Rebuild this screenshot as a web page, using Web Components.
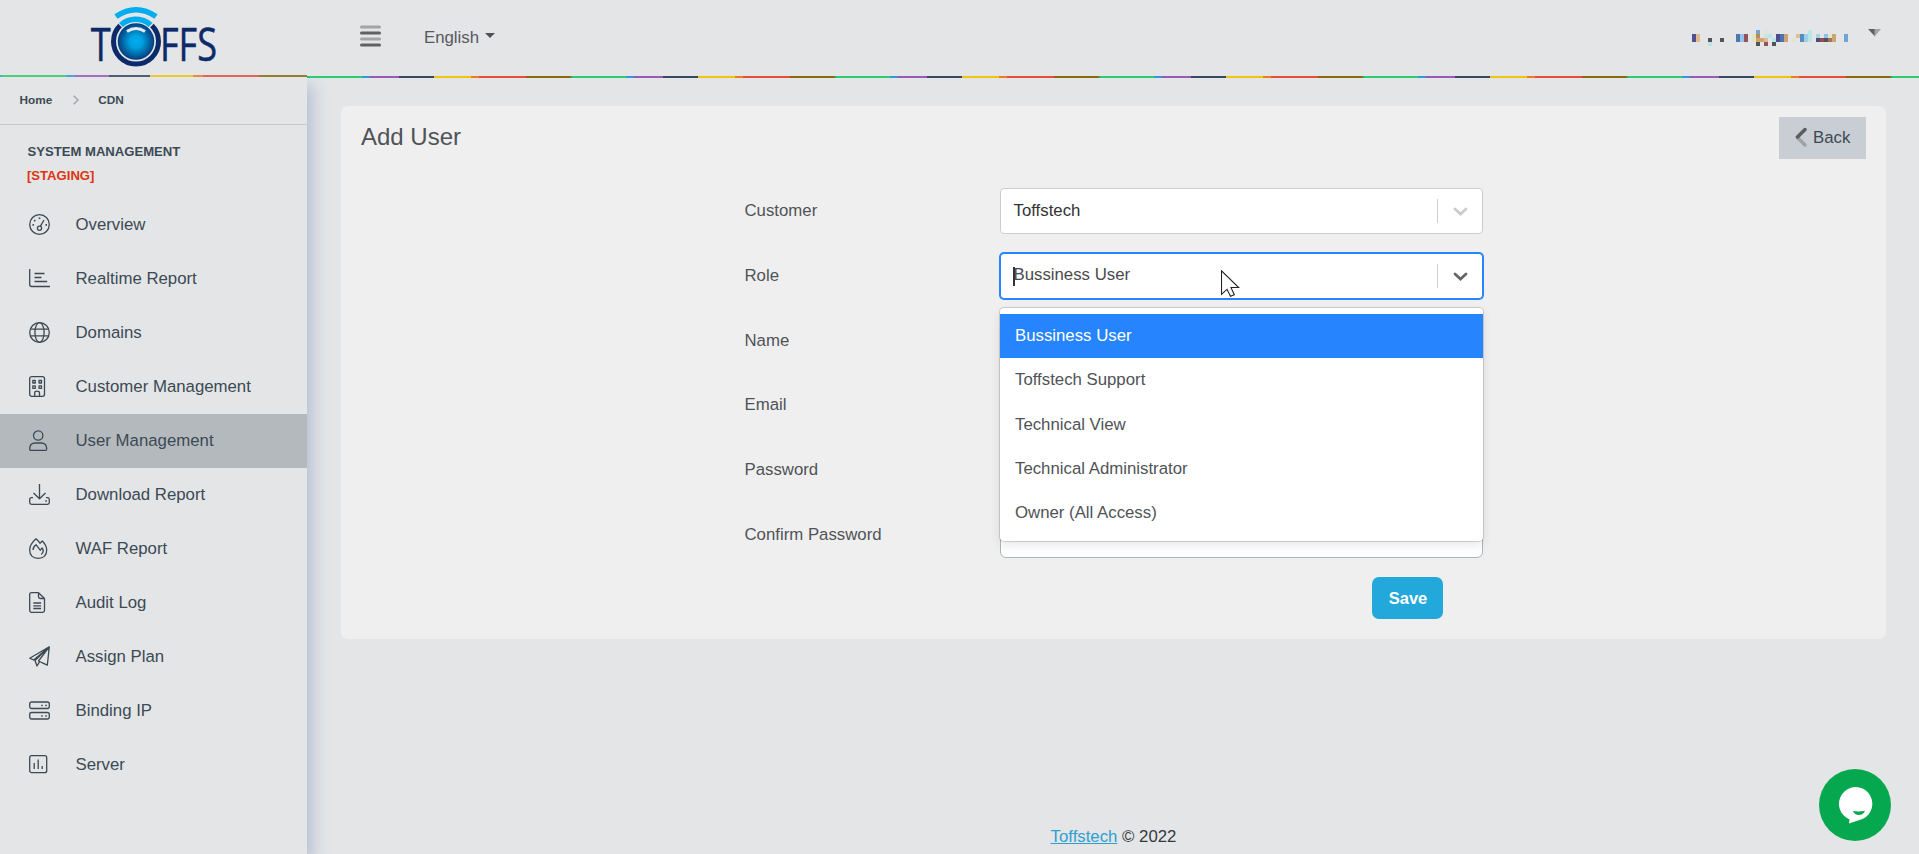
<!DOCTYPE html>
<html lang="en">
<head>
<meta charset="utf-8">
<title>Add User</title>
<style>
html,body{margin:0;height:100%;overflow:hidden}
body{font-family:"Liberation Sans",Arial,sans-serif;font-size:16.800px;line-height:24px;color:#4f5357;background:#e3e5e7}
</style>
</head>
<body>
<app-shell>
  <brand-logo slot="brand"></brand-logo>
  <top-bar slot="top"></top-bar>
  <side-nav slot="side"></side-nav>
  <panel-card heading="Add User">
    <form-row label="Customer"><select-box value="Toffstech"></select-box></form-row>
    <form-row label="Role"><select-box value="Bussiness User" open options="Bussiness User|Toffstech Support|Technical View|Technical Administrator|Owner (All Access)"></select-box></form-row>
    <form-row label="Name"><text-field></text-field></form-row>
    <form-row label="Email"><text-field></text-field></form-row>
    <form-row label="Password"><text-field></text-field></form-row>
    <form-row label="Confirm Password"><text-field></text-field></form-row>
    <save-button>Save</save-button>
  </panel-card>
  <page-footer slot="footer"></page-footer>
</app-shell>
<chat-bubble></chat-bubble>

<script>
const define = (name, render) => customElements.define(name, class extends HTMLElement {
  connectedCallback() {
    if (!this.shadowRoot) this.attachShadow({ mode: 'open' }).innerHTML = render(this);
  }
});

define('app-shell', () => `<style>
:host{display:grid;grid-template-columns:307px 1fr;grid-template-rows:78px 1fr;height:854px}
.brand{position:relative;z-index:3;background:#e3e5e7}
.side{position:relative;z-index:1;margin-top:-1px;background:#e3e5e7;box-shadow:6px 8px 15px rgba(68,97,154,.27)}
.top{position:relative;z-index:2;background:#e3e5e7}
main{display:flex;flex-direction:column;justify-content:space-between;padding:28px 33px 5px 34px}
</style>
<div class="brand"><slot name="brand"></slot></div>
<div class="top"><slot name="top"></slot></div>
<div class="side"><slot name="side"></slot></div>
<main><slot></slot><slot name="footer"></slot></main>`);

define('brand-logo', () => `<style>
:host{display:flex;flex-direction:column;height:77px}
svg{display:block;margin-left:90px;flex:none;overflow:visible}
.stripe{height:2px;opacity:.85;background:linear-gradient(90deg,#1abc9c 3px,#2ecc71 3px 66px,#3498db 66px 75px,#9b59b6 75px 109px,#34495e 109px 150px,#f1c40f 150px 193px,#e67e22 193px 203px,#e74c3c 203px 259px,#8a6a0a 259px)}
</style>
<svg width="130" height="75" viewBox="90 0 130 75">
<defs><radialGradient id="g"><stop offset="0" stop-color="#00adef"/><stop offset=".35" stop-color="#00a0e0"/><stop offset="1" stop-color="#063c7c"/></radialGradient></defs>
<circle cx="136" cy="41.500" r="22.500" fill="#e3e5e7" stroke="#0c2a69" stroke-width="5"/>
<path d="M120.500 26A22 22 0 0 1 151.500 26" fill="none" stroke="#e3e5e7" stroke-width="7"/>
<path d="M121 25A22 22 0 0 1 150.500 25" fill="none" stroke="#00adef" stroke-width="5.500"/>
<path d="M116 16.500Q136 3 156 16.500" fill="none" stroke="#00adef" stroke-width="5.500"/>
<circle cx="136" cy="41.500" r="18.300" fill="url(#g)"/>
<path d="M127 31.500Q136 25.500 145 31.500" fill="none" stroke="#e6eaf0" stroke-width="3"/>
<g font-family="Open Sans, sans-serif" font-size="46" fill="#0c2a69" stroke="#0c2a69" stroke-width=".5">
<text x="90.800" y="61" textLength="20" lengthAdjust="spacingAndGlyphs">T</text>
<text x="160" y="61" textLength="57" lengthAdjust="spacingAndGlyphs">FFS</text></g>
</svg><div class="stripe"></div>`);

const PIXELS = [
 '16:#70a4d3 18:#e3e4d1 29:#b9e5e5',
 '0:#514e94 1:#e2bb90 11:#5076ad 12:#93c2ec 13:#90545a 15:#e3e3bd 16:#bb8b55 18:#c9e6e6 19:#b9e5e5 21:#4d4d8d 22:#5073b0 23:#cfa472 26:#e2bb90 27:#508fc2 28:#9fd0e8 29:#b9e5e5 31:#a5d2e9 33:#8fc0ea 34:#e4e4d1 35:#cfa472 38:#70a4d3',
 '0:#514e94 1:#e2bb90 4:#505357 7:#505357 11:#5076ad 12:#93c2ec 13:#90545a 15:#e3e3bd 16:#cfa472 17:#cfa472 18:#e2bb90 20:#b9e5e5 21:#4d4d8d 22:#5073b0 23:#cfa472 25:#e3e3d1 27:#508fc2 28:#9fd0e8 29:#b9e5e5 31:#4d4d75 32:#90505a 33:#505357 34:#a87456 35:#cfa472 38:#70a4d3',
 '4:#b9e5e5 16:#505357 18:#90545a 20:#505357'
].map((r, y) => r.split(' ').map(c => { const [x, f] = c.split(':'); return `<path fill="${f}" d="M${x * 4} ${y * 4}h4v4h-4z"/>`; }).join('')).join('');

define('top-bar', () => `<style>
:host{display:flex;flex-direction:column;height:78px}
.bar{display:flex;align-items:flex-start;height:76px;flex:none}
.burger{margin:25px 0 0 53px}
.lang{display:flex;gap:6px;margin:26px 0 0 43px;color:#56595d}
.lang svg{margin-top:7px}
.user{margin:30px 0 0 auto}
.caret{margin:29px 38px 0 20px}
svg{display:block}
.stripe{height:2px;background:repeating-linear-gradient(90deg,#1abc9c 0 2px,#2ecc71 2px 55px,#3498db 55px 63px,#9b59b6 63px 92px,#34495e 92px 127px,#f1c40f 127px 164px,#e67e22 164px 172px,#e74c3c 172px 219px,#8a6a0a 219px 264px)}
</style>
<div class="bar">
<svg class="burger" width="21" height="22" stroke-width="3" stroke-linecap="round"><path d="M1.500 2h18M1.500 14h18" stroke="#a3a4a5"/><path d="M1.500 8h18M1.500 20h18" stroke="#5f6061"/></svg>
<div class="lang"><span>English</span><svg width="10" height="6"><path d="M0 0h10L5 5z" fill="#4f5357"/></svg></div>
<svg class="user" width="156" height="16" shape-rendering="crispEdges">${PIXELS}</svg>
<svg class="caret" width="13" height="8"><path d="M0 0h7v7.500z" fill="#5f6061"/><path d="M6.500 0H13L6.500 7.500z" fill="#a3a4a5"/></svg>
</div><div class="stripe"></div>`);

const ICONS = {
 gauge: '<circle cx="10.500" cy="10.500" r="9.800"/><circle cx="10.500" cy="14.300" r="2.100"/><path d="M11.300 12.300 15 6"/><path stroke-width="1.700" d="M10.500 3.500v1.500M5.200 6.200l1.100 1M3.500 10.800H5M16.500 10.800H18"/>',
 report: '<path d="M.7 1v15.500q0 2 2 2H21M5.500 5.500h10M5.500 9.500h7M5.500 13.500h12.700"/>',
 globe: '<circle cx="10.500" cy="10.500" r="9.800"/><ellipse cx="10.500" cy="10.500" rx="4.600" ry="9.800"/><path d="M1.500 7.200h18M1.500 13.800h18"/>',
 building: '<rect x=".7" y=".7" width="14.800" height="19.600" rx="2"/><path d="M3.800 4.500h2.500V7H3.800zM10 4.500h2.500V7H10zM3.800 9.800h2.500v2.500H3.800zM10 9.800h2.500v2.500H10zM5.700 20v-3.300q0-1.500 2.400-1.500t2.400 1.500V20"/>',
 user: '<circle cx="9.200" cy="5.500" r="4.700"/><path d="M.7 19q0-6 5.500-6h6q5.500 0 5.500 6 0 1.300-1.300 1.300H2Q.7 20.300.7 19z"/>',
 download: '<path d="M10.500 0v14M4.500 9l6 5.700 6-5.700M4 13.700H2.500q-1.800 0-1.800 1.800v3q0 1.800 1.800 1.800h16q1.800 0 1.800-1.800v-3q0-1.800-1.800-1.800H17"/><path stroke-width="1.700" d="M16.300 17h1.600"/>',
 fire: '<path d="M7 .8Q.7 6.500.7 11.700q0 8.600 8.500 8.600t8.500-8.600q0-4-4.400-8.700L11 5.200Q9.200 2.500 7 .8zM4 12q0-3.200 3-5.300l4.200 5.500 2-2.300q2.400 4-1 6.500"/>',
 file: '<path d="M9.500.7h-7Q.7.700.7 2.500v16q0 1.800 1.800 1.800h11.200q1.800 0 1.800-1.800V6.500zM9.500.7v4q0 1.800 1.800 1.800h4.200M4.300 11h7.800M4.300 13.800h7.800M4.300 16.500h7.800"/>',
 plane: '<path d="M20.300.8.700 12.200l4 1.800L20.300.8l-2 18.400-5.500-2.600M20.300.8 6 14.500l2 5.500 2.600-4.300M20.300.8 9.500 15l4.300 2"/>',
 server: '<rect x=".7" y="2" width="19.600" height="6.500" rx="1.900"/><rect x=".7" y="12.500" width="19.600" height="6.500" rx="1.900"/><path stroke-width="1.700" d="M12.200 5.500h1.500M16.300 5.500h1.500M12.200 16h1.500M16.300 16h1.500"/>',
 chart: '<rect x=".7" y="1.700" width="17" height="17" rx="2"/><path d="M5.200 9v6M9.200 5.500V15M13.200 12v3"/>'
};

define('nav-item', el => `<style>
:host{display:flex;align-items:center;height:54px;padding-left:28.500px;color:#3c4a54;box-sizing:border-box}
:host([active]){background:#b4b9bd}
svg{width:22px;height:22px;margin:0 25px 0 0;overflow:visible;fill:none;stroke:#3c4a54;stroke-width:1.300;stroke-linejoin:round}
</style><svg viewBox="0 0 22 22">${ICONS[el.getAttribute('icon')]}</svg><slot></slot>`);

define('side-nav', () => `<style>
:host{display:block}
.crumbs{display:flex;align-items:center;height:47px;padding:0 0 2px 19.500px;box-sizing:border-box;font:bold 11.800px/16px "Liberation Sans",Arial,sans-serif;color:#3c4a54}
.crumbs svg{margin:1px 19px 0 21px}
.head{border-top:1px solid #c6c9cb;height:74px;padding:15px 27px 0 27.500px;box-sizing:border-box;font:bold 13.100px/24px "Liberation Sans",Arial,sans-serif;color:#3c4a54}
.head b{display:block;color:#e0340f;font-weight:bold;margin-left:-.5px}
</style>
<div class="crumbs"><span>Home</span><svg width="6" height="10" fill="none" stroke="#a5a8ab" stroke-width="1.500"><path d="M.7.700 5 5 .7 9.300"/></svg><span>CDN</span></div>
<div class="head">SYSTEM MANAGEMENT<b>[STAGING]</b></div>
<nav>
<nav-item icon="gauge">Overview</nav-item>
<nav-item icon="report">Realtime Report</nav-item>
<nav-item icon="globe">Domains</nav-item>
<nav-item icon="building">Customer Management</nav-item>
<nav-item icon="user" active>User Management</nav-item>
<nav-item icon="download">Download Report</nav-item>
<nav-item icon="fire">WAF Report</nav-item>
<nav-item icon="file">Audit Log</nav-item>
<nav-item icon="plane">Assign Plan</nav-item>
<nav-item icon="server">Binding IP</nav-item>
<nav-item icon="chart">Server</nav-item>
</nav>`);

define('panel-card', el => `<style>
:host{display:block;position:relative;height:533px;background:#efefef;border-radius:7px}
header{display:flex;justify-content:space-between;align-items:flex-start;height:64px;padding:11px 20px 0;box-sizing:border-box;border-bottom:1px solid #f1f1f1}
h1{margin:0;font-size:24px;font-weight:400;line-height:40px}
button{display:flex;align-items:center;gap:6px;width:87px;height:42px;padding:0 0 0 16px;border:0;background:#c9cdd4;font:inherit;color:#3c4a54}
button svg{margin-top:-3px}
.body{display:flex;flex-direction:column;gap:18.800px;padding:18px 403px 0 404px}
</style>
<header><h1>${el.getAttribute('heading')}</h1><button><svg width="12" height="20" fill="none" stroke-width="3.500" stroke-linecap="round"><path d="M10 18 2.500 10.500" stroke="#a0a2a5"/><path d="M10 2.500 2.500 10" stroke="#5b5d5f"/></svg>Back</button></header>
<div class="body"><slot></slot></div>`);

define('form-row', el => `<style>
:host{display:grid;grid-template-columns:255px 483px;height:46px}
label{line-height:46px;margin-left:-.5px}
</style><label>${el.getAttribute('label')}</label><slot></slot>`);

define('text-field', () => `<style>
:host{display:block;height:46px;box-sizing:border-box;border:1px solid #adb5bd;border-radius:6px;background:#fff}
</style>`);

define('select-box', el => {
  const open = el.hasAttribute('open');
  const options = (el.getAttribute('options') || '').split('|').filter(Boolean);
  return `<style>
:host{display:block;position:relative;height:46px}
.control{display:flex;align-items:center;height:46px;box-sizing:border-box;border:1px solid #ccc;border-radius:4px;background:#fff;color:#333}
:host([open]) .control{border-color:#2684ff;box-shadow:0 0 0 1px #2684ff;color:#4a4a4a}
.value{flex:1;padding:0 0 1px 12.500px}
.sep{width:1px;height:24px;background:#ccc;margin-right:15px}
.control svg{margin:2px 14px 0 0}
.caret{position:absolute;left:13px;top:14px;width:2px;height:19px;background:#333}
.menu{position:absolute;z-index:5;left:0;right:0;top:55px;padding:6px 0 5px;border-radius:4px;background:#fff;box-shadow:0 0 0 1px rgba(0,0,0,.14),0 4px 11px rgba(0,0,0,.1)}
.opt{height:44.400px;line-height:44px;padding-left:15px;color:#4f5357}
.opt:first-child{background:#2684ff;color:#fff}
.pointer{position:absolute;z-index:6;left:221px;top:17px}
</style>
<div class="control"><span class="value">${el.getAttribute('value')}</span><i class="sep"></i><svg width="15" height="10" fill="none" stroke="${open ? '#666' : '#ccc'}" stroke-width="2.800" stroke-linecap="round"><path d="M2 2l5.500 5L13 2"/></svg></div>
${open ? `<i class="caret"></i><div class="menu">${options.map(o => `<div class="opt">${o}</div>`).join('')}</div>
<svg class="pointer" width="19" height="28"><path d="M.5.800v23.500l5.500-5 3.500 7 3.800-1.500-3.300-7.300h7.700z" fill="#fff" stroke="#222" stroke-width="1.100"/></svg>` : ''}`;
});

define('save-button', () => `<style>
:host{display:block;align-self:flex-end;margin-right:40px;width:71px;height:42px;border-radius:7px;background:#22a8da;color:#fff;font-weight:bold;font-size:16.500px;line-height:43px;text-align:center;text-indent:1px}
</style><slot></slot>`);

define('page-footer', () => `<style>
:host{display:block;text-align:center;color:#333a40}
a{color:#2f9fd0;text-decoration:underline}
</style><a href="#">Toffstech</a> © 2022`);

define('chat-bubble', () => `<style>
:host{display:block;position:absolute;left:1819px;top:769px;width:72px;height:72px}
svg{display:block}
</style><svg width="72" height="72"><circle cx="36" cy="36" r="36" fill="#05a84e"/><path d="M30.500 50.300A16.700 16.700 0 1 1 43.500 50Q36 52.500 30 54.500z" fill="#fff"/><path d="M34 42q6.500 1 12-.3-2 4.300-6 4.300-4.500 0-6-4z" fill="#05a84e"/></svg>`);
</script>
</body>
</html>
